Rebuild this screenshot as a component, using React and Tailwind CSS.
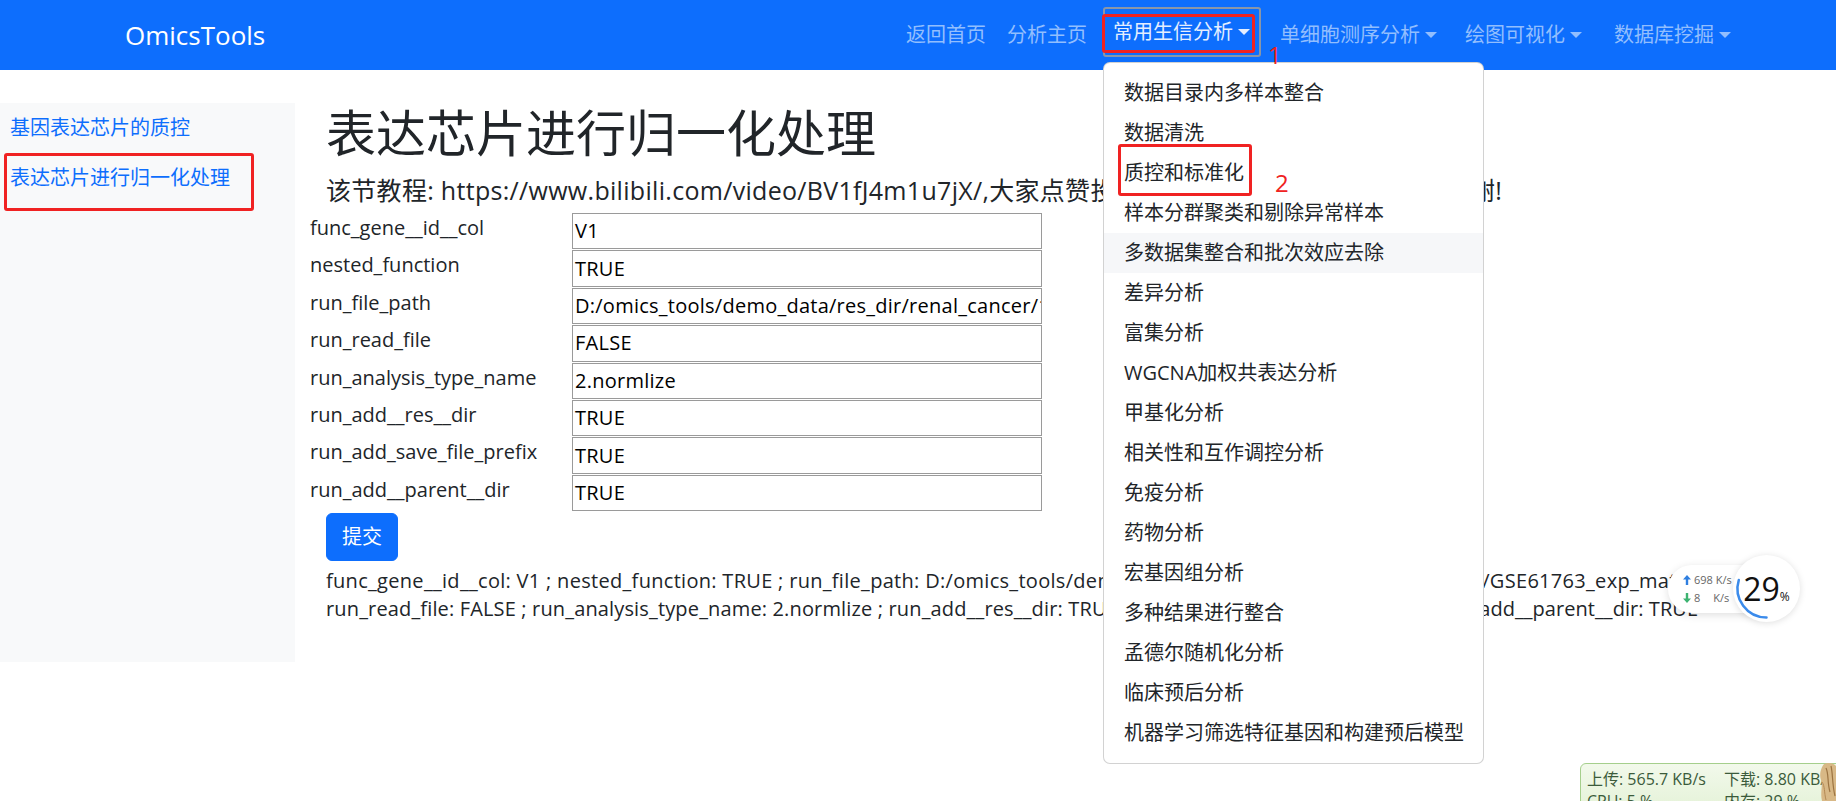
const menuItems = [
  "数据目录内多样本整合",
  "数据清洗",
  "质控和标准化",
  "样本分群聚类和剔除异常样本",
  "多数据集整合和批次效应去除",
  "差异分析",
  "富集分析",
  "WGCNA加权共表达分析",
  "甲基化分析",
  "相关性和互作调控分析",
  "免疫分析",
  "药物分析",
  "宏基因组分析",
  "多种结果进行整合",
  "孟德尔随机化分析",
  "临床预后分析",
  "机器学习筛选特征基因和构建预后模型",
];

const rows = [
  ["func_gene__id__col", "V1"],
  ["nested_function", "TRUE"],
  ["run_file_path", "D:/omics_tools/demo_data/res_dir/renal_cancer/1.qc_data/GSE61763_exp_mat.txt"],
  ["run_read_file", "FALSE"],
  ["run_analysis_type_name", "2.normlize"],
  ["run_add__res__dir", "TRUE"],
  ["run_add_save_file_prefix", "TRUE"],
  ["run_add__parent__dir", "TRUE"],
];

function Caret() {
  return (
    <span className="ml-[5px] inline-block h-0 w-0 border-x-[6px] border-t-[6px] border-x-transparent border-t-current" />
  );
}

export default function App() {
  return (
    <div className="relative h-[801px] w-[1836px] overflow-hidden bg-white font-['Open_Sans','Noto_Sans_CJK_SC',sans-serif] text-[#212529]">
      {/* Navbar */}
      <nav className="flex h-[70px] items-center justify-between bg-[#0d6efd] pl-[125px] pr-[105px]">
        <a className="text-[26px] leading-[37px] text-white">OmicsTools</a>
        <div className="flex items-center text-[20px] leading-[30px]">
          <a className="text-[#92befe]">返回首页</a>
          <a className="ml-[21px] text-[#92befe]">分析主页</a>
          <a className="-mt-[6px] ml-[16px] flex h-[50px] items-center rounded-[3px] border-2 border-[#8a96a8] pl-[8px] pr-[9px] text-[#e4eeff]">
            常用生信分析
            <Caret />
          </a>
          <a className="ml-[19px] flex items-center text-[#92befe]">
            单细胞测序分析
            <Caret />
          </a>
          <a className="ml-[28px] flex items-center text-[#92befe]">
            绘图可视化
            <Caret />
          </a>
          <a className="ml-[32px] flex items-center text-[#92befe]">
            数据库挖掘
            <Caret />
          </a>
        </div>
      </nav>

      {/* Body */}
      <div className="flex pt-[33px]">
        <aside className="h-[559px] w-[295px] shrink-0 bg-[#f8f9fa]">
          <a className="block py-[10px] pl-[10px] text-[20px] leading-[30px] text-[#0d6efd]">基因表达芯片的质控</a>
          <a className="block py-[10px] pl-[10px] text-[20px] leading-[30px] text-[#0d6efd]">表达芯片进行归一化处理</a>
        </aside>

        <main className="ml-[31px] w-[1420px]">
          <h1 className="text-[50px] leading-[60px]">表达芯片进行归一化处理</h1>
          <h5 className="mt-[12px] whitespace-nowrap text-[25px] leading-[30px] tracking-[0.3px]">
            该节教程: https://www.bilibili.com/video/BV1fJ4m1u7jX/,大家点赞投币收藏，有问题在评论区留言，谢!
          </h5>

          <div className="-ml-[16px] mt-[8px] flex flex-col gap-[1px]">
            {rows.map(([label, value]) => (
              <div key={label} className="flex h-[36.4px]">
                <div className="w-[262px] text-[20px] leading-[30px]">{label}</div>
                <div className="flex h-full w-[470px] items-center overflow-hidden whitespace-nowrap border border-[#9a9a9a] px-[2px] text-[20px] tracking-[0.25px] text-black">
                  {value}
                </div>
              </div>
            ))}
          </div>

          <button className="mt-[2px] rounded-[6px] border border-[#0d6efd] bg-[#0d6efd] px-[15px] py-[8px] text-[20px] leading-[30px] text-white">
            提交
          </button>

          <div className="mt-[6px] overflow-hidden whitespace-nowrap text-[20px] leading-[28px]">
            <div className="tracking-[0.3px]">
              func_gene__id__col: V1 ; nested_function: TRUE ; run_file_path: D:/omics_tools/demo_data/res_dir/renal_cancer/1.qc_data/GSE61763_exp_mat.txt ;
            </div>
            <div>
              <span className="tracking-[0.15px]">run_read_file: FALSE ; run_analysis_type_name: 2.normlize ; run_add__res__dir: TRU</span>
              <span className="tracking-[0.05px]">E ; run_add_save_file_prefix: TRUE ; run_add__parent__dir: TRUE</span>
            </div>
          </div>
        </main>
      </div>

      {/* Dropdown menu */}
      <div className="absolute left-[1103px] top-[62px] w-[381px] rounded-[7px] border border-[rgba(0,0,0,0.175)] bg-white py-[10px]">
        {menuItems.map((item, i) => (
          <div
            key={item}
            className={
              i === 4
                ? "h-[40px] whitespace-nowrap bg-[#f6f7f9] px-[20px] py-[5px] text-[20px] leading-[30px]"
                : "h-[40px] whitespace-nowrap px-[20px] py-[5px] text-[20px] leading-[30px]"
            }
          >
            {item}
          </div>
        ))}
      </div>

      {/* Red annotations */}
      <div className="absolute left-[1102px] top-[14px] h-[39px] w-[153px] rounded-[3px] border-[3px] border-[#f02222]" />
      <div className="absolute left-[1268px] top-[43px] text-[24px] leading-none text-[#f02222]">1</div>
      <div className="absolute left-[1118px] top-[144px] h-[52px] w-[134px] rounded-[3px] border-[3px] border-[#f02222]" />
      <div className="absolute left-[1275px] top-[171px] text-[24px] leading-none text-[#f02222]">2</div>
      <div className="absolute left-[4px] top-[153px] h-[58px] w-[250px] rounded-[3px] border-[3px] border-[#f02222]" />

      {/* Floating speed widget */}
      <div className="absolute left-[1668px] top-[565px] flex h-[48px] w-[100px] flex-col justify-center gap-[2px] rounded-l-[24px] bg-white pl-[15px] text-[11px] leading-[16px] text-[#666] shadow-[0_2px_8px_rgba(0,0,0,0.13)]">
        <div className="flex items-center">
          <svg width="8" height="10" viewBox="0 0 8 10" className="mr-[3px]">
            <path d="M4 0 L8 4.5 H5.2 V10 H2.8 V4.5 H0 Z" fill="#2f7fe0" />
          </svg>
          <span>698 K/s</span>
        </div>
        <div className="flex items-center">
          <svg width="8" height="10" viewBox="0 0 8 10" className="mr-[3px]">
            <path d="M4 10 L8 5.5 H5.2 V0 H2.8 V5.5 H0 Z" fill="#3cb371" />
          </svg>
          <span>8</span>
          <span className="ml-[13px]">K/s</span>
        </div>
      </div>
      <div className="absolute left-[1733px] top-[555px] flex h-[67px] w-[67px] items-center justify-center rounded-full bg-white shadow-[0_1px_7px_rgba(0,0,0,0.13)]">
        <svg width="67" height="67" viewBox="0 0 67 67" className="absolute left-0 top-0">
          <path d="M5.77 25.02 A29 29 0 0 0 33.5 62.5" fill="none" stroke="#3b8beb" strokeWidth="2.5" strokeLinecap="round" />
        </svg>
        <span className="relative flex items-baseline text-[#111]">
          <span className="text-[32px] leading-none">29</span>
          <span className="text-[12px] leading-none">%</span>
        </span>
      </div>

      {/* Bottom-right system monitor */}
      <div className="absolute left-[1580px] top-[763px] h-[50px] w-[270px] rounded-tl-[6px] border border-[#a5cf8c] bg-gradient-to-b from-[#f2f9eb] to-[#e4f2d7] pl-[6px] pt-[4px] text-[16px] leading-[22px] text-[#3b5b3b]">
        <div className="grid grid-cols-[137px_1fr] whitespace-nowrap">
          <span>上传: 565.7 KB/s</span>
          <span>下载: 8.80 KB/s</span>
          <span>CPU: 5 %</span>
          <span>内存: 29 %</span>
        </div>
      </div>
      <svg className="absolute left-[1818px] top-[762px]" width="18" height="39" viewBox="0 0 18 39">
        <path d="M6 2 C10 0 16 1 18 4 L18 39 L4 39 C2 30 5 24 3 18 C1 12 3 6 6 2 Z" fill="#d8b886" />
        <path d="M8 6 C11 12 9 20 12 30 M13 4 C15 12 14 22 17 34" stroke="#9c7442" strokeWidth="1.2" fill="none" />
        <path d="M4 20 C7 24 6 30 8 38" stroke="#b48a55" strokeWidth="1" fill="none" />
      </svg>
    </div>
  );
}
